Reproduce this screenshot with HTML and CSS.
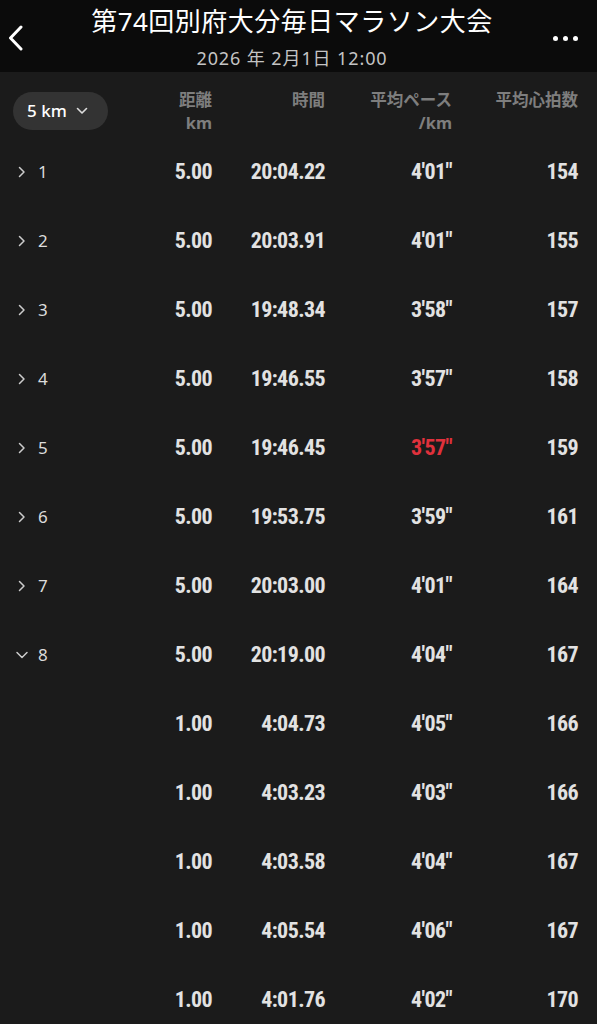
FILE: index.html
```html
<!DOCTYPE html>
<html lang="ja">
<head>
  <meta charset="UTF-8">
  <meta name="viewport" content="width=device-width, initial-scale=1">
  <title>ラップ</title>
  <link rel="stylesheet" href="styles.css">
</head>
<body>
  <!-- Top bar -->
  <header class="topbar">
    <button class="back-btn" aria-label="戻る">
      <svg width="18" height="26" viewBox="0 0 18 26"><path d="M14 2 L3.5 13 L14 24" fill="none" stroke="#fff" stroke-width="3" stroke-linecap="round" stroke-linejoin="round"/></svg>
    </button>
    <div class="titles">
      <h1>第74回別府大分毎日マラソン大会</h1>
      <p class="subtitle">2026 年 2月1日 12:00</p>
    </div>
    <button class="more-btn" aria-label="その他">
      <span></span><span></span><span></span>
    </button>
  </header>

  <!-- Laps table -->
  <main class="laps">
    <div class="lap-head">
      <div class="cell first">
        <button class="unit-pill">5 km
          <svg width="12" height="8" viewBox="0 0 12 8"><path d="M1.5 1.5 L6 6 L10.5 1.5" fill="none" stroke="#ddd" stroke-width="1.6" stroke-linecap="round" stroke-linejoin="round"/></svg>
        </button>
      </div>
      <div class="cell"><span class="h-main">距離</span><span class="h-unit">km</span></div>
      <div class="cell"><span class="h-main">時間</span><span class="h-unit">&nbsp;</span></div>
      <div class="cell"><span class="h-main">平均ペース</span><span class="h-unit">/km</span></div>
      <div class="cell"><span class="h-main">平均心拍数</span><span class="h-unit">&nbsp;</span></div>
    </div>

    <div class="lap-row">
      <div class="cell first"><svg class="chev" width="10" height="12" viewBox="0 0 10 12"><path d="M2.5 1.5 L7 6 L2.5 10.5" fill="none" stroke="#ccc" stroke-width="1.5" stroke-linecap="round" stroke-linejoin="round"/></svg><span class="lap-no">1</span></div>
      <div class="cell">5.00</div><div class="cell">20:04.22</div><div class="cell">4'01"</div><div class="cell">154</div>
    </div>
    <div class="lap-row">
      <div class="cell first"><svg class="chev" width="10" height="12" viewBox="0 0 10 12"><path d="M2.5 1.5 L7 6 L2.5 10.5" fill="none" stroke="#ccc" stroke-width="1.5" stroke-linecap="round" stroke-linejoin="round"/></svg><span class="lap-no">2</span></div>
      <div class="cell">5.00</div><div class="cell">20:03.91</div><div class="cell">4'01"</div><div class="cell">155</div>
    </div>
    <div class="lap-row">
      <div class="cell first"><svg class="chev" width="10" height="12" viewBox="0 0 10 12"><path d="M2.5 1.5 L7 6 L2.5 10.5" fill="none" stroke="#ccc" stroke-width="1.5" stroke-linecap="round" stroke-linejoin="round"/></svg><span class="lap-no">3</span></div>
      <div class="cell">5.00</div><div class="cell">19:48.34</div><div class="cell">3'58"</div><div class="cell">157</div>
    </div>
    <div class="lap-row">
      <div class="cell first"><svg class="chev" width="10" height="12" viewBox="0 0 10 12"><path d="M2.5 1.5 L7 6 L2.5 10.5" fill="none" stroke="#ccc" stroke-width="1.5" stroke-linecap="round" stroke-linejoin="round"/></svg><span class="lap-no">4</span></div>
      <div class="cell">5.00</div><div class="cell">19:46.55</div><div class="cell">3'57"</div><div class="cell">158</div>
    </div>
    <div class="lap-row">
      <div class="cell first"><svg class="chev" width="10" height="12" viewBox="0 0 10 12"><path d="M2.5 1.5 L7 6 L2.5 10.5" fill="none" stroke="#ccc" stroke-width="1.5" stroke-linecap="round" stroke-linejoin="round"/></svg><span class="lap-no">5</span></div>
      <div class="cell">5.00</div><div class="cell">19:46.45</div><div class="cell best">3'57"</div><div class="cell">159</div>
    </div>
    <div class="lap-row">
      <div class="cell first"><svg class="chev" width="10" height="12" viewBox="0 0 10 12"><path d="M2.5 1.5 L7 6 L2.5 10.5" fill="none" stroke="#ccc" stroke-width="1.5" stroke-linecap="round" stroke-linejoin="round"/></svg><span class="lap-no">6</span></div>
      <div class="cell">5.00</div><div class="cell">19:53.75</div><div class="cell">3'59"</div><div class="cell">161</div>
    </div>
    <div class="lap-row">
      <div class="cell first"><svg class="chev" width="10" height="12" viewBox="0 0 10 12"><path d="M2.5 1.5 L7 6 L2.5 10.5" fill="none" stroke="#ccc" stroke-width="1.5" stroke-linecap="round" stroke-linejoin="round"/></svg><span class="lap-no">7</span></div>
      <div class="cell">5.00</div><div class="cell">20:03.00</div><div class="cell">4'01"</div><div class="cell">164</div>
    </div>
    <div class="lap-row">
      <div class="cell first"><svg class="chev open" width="14" height="10" viewBox="0 0 14 10"><path d="M2 2.5 L7 7.5 L12 2.5" fill="none" stroke="#ccc" stroke-width="1.5" stroke-linecap="round" stroke-linejoin="round"/></svg><span class="lap-no">8</span></div>
      <div class="cell">5.00</div><div class="cell">20:19.00</div><div class="cell">4'04"</div><div class="cell">167</div>
    </div>

    <!-- splits of lap 8 -->
    <div class="lap-row sub">
      <div class="cell first"></div>
      <div class="cell">1.00</div><div class="cell">4:04.73</div><div class="cell">4'05"</div><div class="cell">166</div>
    </div>
    <div class="lap-row sub">
      <div class="cell first"></div>
      <div class="cell">1.00</div><div class="cell">4:03.23</div><div class="cell">4'03"</div><div class="cell">166</div>
    </div>
    <div class="lap-row sub">
      <div class="cell first"></div>
      <div class="cell">1.00</div><div class="cell">4:03.58</div><div class="cell">4'04"</div><div class="cell">167</div>
    </div>
    <div class="lap-row sub">
      <div class="cell first"></div>
      <div class="cell">1.00</div><div class="cell">4:05.54</div><div class="cell">4'06"</div><div class="cell">167</div>
    </div>
    <div class="lap-row sub">
      <div class="cell first"></div>
      <div class="cell">1.00</div><div class="cell">4:01.76</div><div class="cell">4'02"</div><div class="cell">170</div>
    </div>
  </main>
</body>
</html>
```
FILE: styles.css
```css
/* Global */
* {
  box-sizing: border-box;
  margin: 0;
  padding: 0;
}
body {
  background: #1b1b1b;
  color: #e4e4e4;
  font-family: 'Noto Sans', 'Noto Sans CJK JP', sans-serif;
  overflow: hidden;
}
button {
  background: none;
  border: none;
  font: inherit;
  color: inherit;
}

/* Top bar */
.topbar {
  height: 72px;
  background: #0b0b0b;
  display: flex;
  align-items: center;
  padding: 0 19px 0 7px;
}
.back-btn {
  width: 24px;
  display: flex;
  padding-top: 4px;
}
.titles {
  flex: 1;
  align-self: flex-start;
  text-align: center;
  padding-top: 6px;
}
.titles h1 {
  font-family: 'Noto Sans', 'Noto Sans CJK JP', sans-serif;
  font-size: 26px;
  font-weight: 400;
  color: #fff;
  line-height: 30px;
  letter-spacing: 0.5px;
}
.subtitle {
  font-family: 'Noto Sans', 'Noto Sans CJK JP', sans-serif;
  font-size: 18px;
  color: #c4c4c4;
  line-height: 22px;
  margin-top: 11px;
  letter-spacing: 0.9px;
}
.more-btn {
  width: 25px;
  display: flex;
  justify-content: space-between;
  padding-top: 4px;
}
.more-btn span {
  width: 5px;
  height: 5px;
  border-radius: 50%;
  background: #fff;
}

/* Lap table */
.laps {
  padding: 0 19px 0 13px;
}
.lap-head, .lap-row {
  display: grid;
  grid-template-columns: 127px 72px 113px 127px 126px;
  align-items: center;
}
.lap-head {
  height: 65px;
  padding-top: 12px;
}
.lap-head .cell {
  display: flex;
  flex-direction: column;
  align-items: flex-end;
  font-size: 16.5px;
  font-weight: 700;
  color: #7e7e7e;
}
.h-main {
  font-family: 'Noto Sans CJK JP', sans-serif;
  line-height: 24px;
}
.h-unit {
  font-family: 'Noto Sans', sans-serif;
  line-height: 23px;
}
.lap-head .cell.first {
  align-items: flex-start;
}
.unit-pill {
  display: inline-flex;
  align-items: center;
  gap: 9px;
  height: 38px;
  width: 95px;
  padding-left: 14px;
  border-radius: 19px;
  background: #333;
  color: #fff;
  font-family: 'Noto Sans', sans-serif;
  font-size: 17px;
  font-weight: 500;
}
.lap-row {
  height: 69px;
}
.lap-row .cell {
  text-align: right;
  font-family: Roboto, sans-serif;
  font-stretch: 75%;
  font-weight: 700;
  font-size: 22px;
  letter-spacing: -0.6px;
  color: #e2e2e2;
}
.lap-row .cell.first {
  display: flex;
  align-items: center;
  text-align: left;
  padding-left: 4px;
}
.chev {
  width: 10px;
  margin-right: 11px;
}
.chev.open {
  width: 14px;
  margin-left: -2px;
  margin-right: 9px;
}
.lap-no {
  font-family: 'Noto Sans', sans-serif;
  font-stretch: normal;
  font-weight: 400;
  font-size: 17px;
  letter-spacing: 0;
  color: #dcdcdc;
}
.lap-row .cell.best {
  color: #e0313c;
}
```
